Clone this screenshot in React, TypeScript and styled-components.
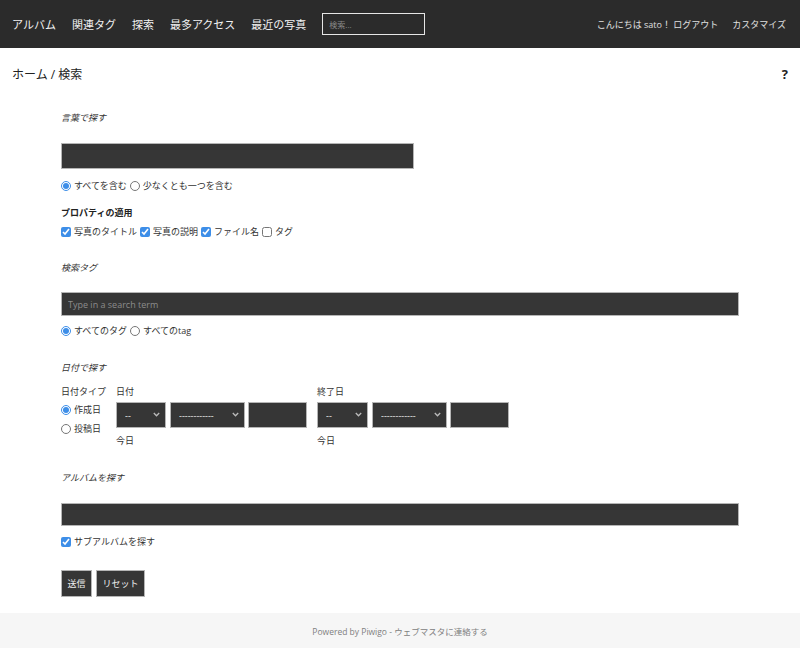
import styled, { createGlobalStyle } from "styled-components";

const Global = createGlobalStyle`
  html, body {
    margin: 0;
    padding: 0;
    background: #fff;
  }
  body {
    font-family: "Open Sans", "Noto Sans CJK JP", sans-serif;
    color: #222;
  }
  * {
    box-sizing: border-box;
  }
`;

const Navbar = styled.nav`
  height: 48px;
  background: #2b2b2b;
  display: flex;
  align-items: center;
  padding: 0 14px 0 12px;
`;

const NavLinks = styled.div`
  display: flex;
  align-items: center;
  gap: 16px;
`;

const NavLink = styled.a`
  color: #f2f2f2;
  font-size: 11px;
  text-decoration: none;
  white-space: nowrap;
`;

const NavSearch = styled.input`
  width: 103px;
  height: 22px;
  background: #2b2b2b;
  border: 1px solid #e6e6e6;
  color: #ccc;
  font-family: inherit;
  font-size: 8px;
  padding: 0 6px;
  outline: none;
  &::placeholder {
    color: #888;
  }
`;

const UserLinks = styled.div`
  margin-left: auto;
  display: flex;
  align-items: center;
  gap: 14px;
`;

const UserLink = styled.a`
  color: #e0e0e0;
  font-size: 9px;
  text-decoration: none;
  white-space: nowrap;
`;

const TitleBar = styled.div`
  height: 52px;
  display: flex;
  align-items: center;
  justify-content: space-between;
  padding: 0 12px;
`;

const Crumbs = styled.div`
  font-size: 12px;
  color: #222;
`;

const Help = styled.span`
  font-size: 13px;
  font-weight: 700;
  color: #222;
`;

const Form = styled.form`
  padding: 0 61px;
`;

const Legend = styled.div<{ $top: number }>`
  margin-top: ${(p) => p.$top}px;
  font-size: 9px;
  line-height: 12px;
  font-style: italic;
  color: #333;
`;

const TextField = styled.input<{ $top: number; $h: number; $w?: number }>`
  display: block;
  margin-top: ${(p) => p.$top}px;
  height: ${(p) => p.$h}px;
  width: ${(p) => (p.$w ? `${p.$w}px` : "100%")};
  background: #363636;
  border: 1px solid #b5b5b5;
  color: #ddd;
  font-family: inherit;
  font-size: 9px;
  padding: 0 6px;
  outline: none;
  &::placeholder {
    color: #8c8c8c;
  }
`;

const OptionRow = styled.div<{ $top: number }>`
  margin-top: ${(p) => p.$top}px;
  display: flex;
  align-items: center;
  gap: 3px;
  font-size: 9px;
  line-height: 14px;
  color: #333;
`;

const Choice = styled.label`
  display: inline-flex;
  align-items: center;
  gap: 3px;
  white-space: nowrap;
`;

const Radio = styled.input.attrs({ type: "radio" })`
  width: 10px;
  height: 10px;
  margin: 0;
  accent-color: #3d8ee8;
`;

const Check = styled.input.attrs({ type: "checkbox" })`
  width: 10px;
  height: 10px;
  margin: 0;
  accent-color: #3d8ee8;
`;

const SubTitle = styled.div<{ $top: number }>`
  margin-top: ${(p) => p.$top}px;
  font-size: 9px;
  line-height: 12px;
  font-weight: 700;
  color: #222;
`;

const DateArea = styled.div`
  margin-top: 12px;
  display: grid;
  grid-template-columns: 55px 201px 202px;
  font-size: 9px;
  color: #333;
`;

const DateCol = styled.div`
  display: flex;
  flex-direction: column;
`;

const ColLabel = styled.div`
  line-height: 12px;
  height: 12px;
  white-space: nowrap;
`;

const TypeChoice = styled.label<{ $top: number }>`
  margin-top: ${(p) => p.$top}px;
  display: flex;
  align-items: center;
  gap: 3px;
  line-height: 14px;
`;

const Fields = styled.div`
  margin-top: 4px;
  display: flex;
  gap: 3px;
`;

const SelectWrap = styled.div<{ $w: number }>`
  position: relative;
  width: ${(p) => p.$w}px;
  height: 26px;
  & + & {
    margin-left: 1px;
  }
`;

const Select = styled.select`
  appearance: none;
  width: 100%;
  height: 100%;
  background: #363636;
  border: 1px solid #b5b5b5;
  color: #eee;
  font-family: inherit;
  font-size: 9px;
  padding: 0 8px;
  outline: none;
`;

const Chevron = styled.svg`
  position: absolute;
  right: 6px;
  top: 10px;
  pointer-events: none;
`;

const YearField = styled.input`
  width: 59px;
  height: 26px;
  background: #363636;
  border: 1px solid #b5b5b5;
  color: #eee;
  font-family: inherit;
  font-size: 9px;
  padding: 0 6px;
  outline: none;
`;

const Today = styled.div`
  margin-top: 7px;
  line-height: 12px;
`;

const Buttons = styled.div`
  margin-top: 21px;
  display: flex;
  gap: 4px;
`;

const Button = styled.button<{ $w: number }>`
  width: ${(p) => p.$w}px;
  height: 27px;
  background: #363636;
  border: 1px solid #b5b5b5;
  color: #f0f0f0;
  font-family: inherit;
  font-size: 9px;
  padding: 0;
  cursor: pointer;
`;

const Footer = styled.footer`
  margin-top: 16px;
  height: 35px;
  background: #f6f6f6;
  display: flex;
  align-items: center;
  justify-content: center;
  font-size: 8.5px;
  color: #808080;
`;

function DropDown({ w, text }: { w: number; text: string }) {
  return (
    <SelectWrap $w={w}>
      <Select defaultValue="x">
        <option value="x">{text}</option>
      </Select>
      <Chevron width="7" height="5" viewBox="0 0 7 5">
        <polyline points="0.8,1 3.5,3.8 6.2,1" fill="none" stroke="#bbb" strokeWidth="1.3" />
      </Chevron>
    </SelectWrap>
  );
}

function DateGroup({ label, first }: { label: string; first: number }) {
  return (
    <DateCol>
      <ColLabel>{label}</ColLabel>
      <Fields>
        <DropDown w={first} text="--" />
        <DropDown w={75} text="------------" />
        <YearField type="text" />
      </Fields>
      <Today>今日</Today>
    </DateCol>
  );
}

const App = () => {
  return (
    <>
      <Global />
      <Navbar>
        <NavLinks>
          <NavLink href="#">アルバム</NavLink>
          <NavLink href="#">関連タグ</NavLink>
          <NavLink href="#">探索</NavLink>
          <NavLink href="#">最多アクセス</NavLink>
          <NavLink href="#">最近の写真</NavLink>
          <NavSearch type="text" placeholder="検索..." />
        </NavLinks>
        <UserLinks>
          <UserLink href="#">こんにちは sato！ ログアウト</UserLink>
          <UserLink href="#">カスタマイズ</UserLink>
        </UserLinks>
      </Navbar>

      <TitleBar>
        <Crumbs>ホーム / 検索</Crumbs>
        <Help>?</Help>
      </TitleBar>

      <Form onSubmit={(e) => e.preventDefault()}>
        <Legend $top={12}>言葉で探す</Legend>
        <TextField type="text" $top={19} $h={26} $w={353} />
        <OptionRow $top={10}>
          <Choice>
            <Radio name="mode" defaultChecked />
            すべてを含む
          </Choice>
          <Choice>
            <Radio name="mode" />
            少なくとも一つを含む
          </Choice>
        </OptionRow>
        <SubTitle $top={14}>プロパティの適用</SubTitle>
        <OptionRow $top={6}>
          <Choice>
            <Check defaultChecked />
            写真のタイトル
          </Choice>
          <Choice>
            <Check defaultChecked />
            写真の説明
          </Choice>
          <Choice>
            <Check defaultChecked />
            ファイル名
          </Choice>
          <Choice>
            <Check />
            タグ
          </Choice>
        </OptionRow>

        <Legend $top={23}>検索タグ</Legend>
        <TextField type="text" placeholder="Type in a search term" $top={18} $h={24} />
        <OptionRow $top={8}>
          <Choice>
            <Radio name="tagmode" defaultChecked />
            すべてのタグ
          </Choice>
          <Choice>
            <Radio name="tagmode" />
            すべてのtag
          </Choice>
        </OptionRow>

        <Legend $top={24}>日付で探す</Legend>
        <DateArea>
          <DateCol>
            <ColLabel>日付タイプ</ColLabel>
            <TypeChoice $top={5}>
              <Radio name="datetype" defaultChecked />
              作成日
            </TypeChoice>
            <TypeChoice $top={5}>
              <Radio name="datetype" />
              投稿日
            </TypeChoice>
          </DateCol>
          <DateGroup label="日付" first={50} />
          <DateGroup label="終了日" first={51} />
        </DateArea>

        <Legend $top={25}>アルバムを探す</Legend>
        <TextField type="text" $top={19} $h={23} />
        <OptionRow $top={9}>
          <Choice>
            <Check defaultChecked />
            サブアルバムを探す
          </Choice>
        </OptionRow>

        <Buttons>
          <Button $w={31} type="submit">送信</Button>
          <Button $w={49} type="reset">リセット</Button>
        </Buttons>
      </Form>

      <Footer>Powered by Piwigo - ウェブマスタに連絡する</Footer>
    </>
  );
};

export default App;
